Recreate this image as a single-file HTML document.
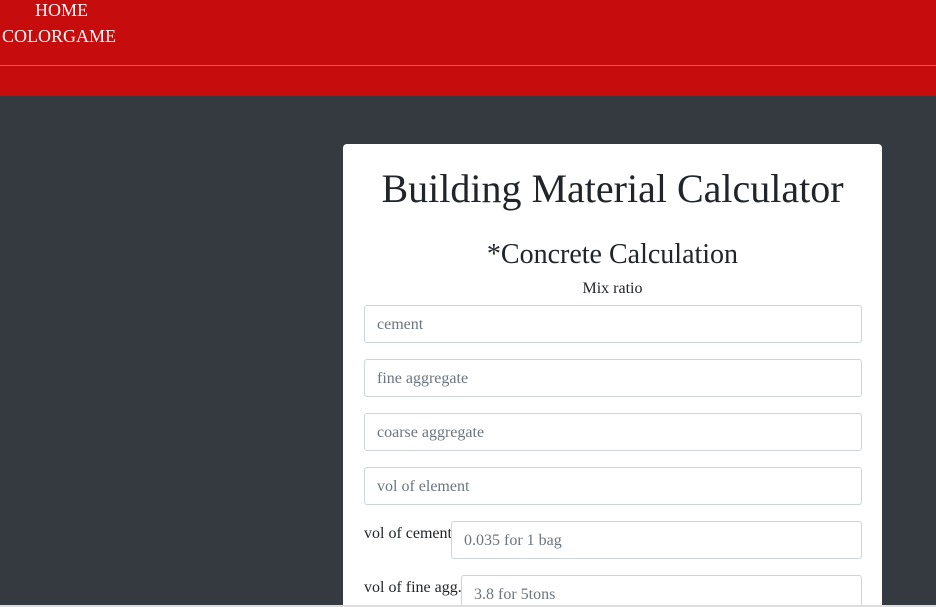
<!DOCTYPE html>
<html style="overflow:hidden;height:607px"><head><style>
body{margin:0;width:936px;height:607px;overflow:hidden;background:#343a40;font-family:"Liberation Serif",serif;position:relative}
.hdr{position:absolute;left:0;top:0;width:936px;height:96px;background:#c60c0c}
.line{position:absolute;left:0;top:65px;width:936px;height:1px;background:#dc5a5a}
.nav{position:absolute;color:#fff;font-size:18px}
.card{position:absolute;left:343px;top:144px;width:539px;height:461px;background:#fff;border-radius:4px 4px 0 0;overflow:hidden}
.t{position:absolute;left:0;width:539px;text-align:center;color:#212529}
.in{position:absolute;border:1px solid #ced4da;border-radius:3px;color:#6c757d;font-size:16px;line-height:38px;padding-left:12px;box-sizing:border-box;height:38px}
.lb{position:absolute;left:21px;font-size:16px;color:#212529}
.bot{position:absolute;left:0;top:605px;width:936px;height:2px;background:#ddd}
</style></head><body>
<div class="hdr"><div class="line"></div>
<div class="nav" style="left:35px;top:0px">HOME</div>
<div class="nav" style="left:2px;top:26px">COLORGAME</div></div>
<div class="card">
<div class="t" style="top:22px;font-size:40px;line-height:46px">Building Material Calculator</div>
<div class="t" style="top:94px;font-size:28px;line-height:34px">*Concrete Calculation</div>
<div class="t" style="top:135px;font-size:16px;line-height:20px">Mix ratio</div>
<div class="in" style="left:21px;top:161px;width:498px">cement</div>
<div class="in" style="left:21px;top:215px;width:498px">fine aggregate</div>
<div class="in" style="left:21px;top:269px;width:498px">coarse aggregate</div>
<div class="in" style="left:21px;top:323px;width:498px">vol of element</div>
<div class="lb" style="top:381px">vol of cement</div>
<div class="in" style="left:108px;top:377px;width:411px">0.035 for 1 bag</div>
<div class="lb" style="top:435px">vol of fine agg.</div>
<div class="in" style="left:118px;top:431px;width:401px">3.8 for 5tons</div>
</div>
<div class="bot"></div>
</body></html>
